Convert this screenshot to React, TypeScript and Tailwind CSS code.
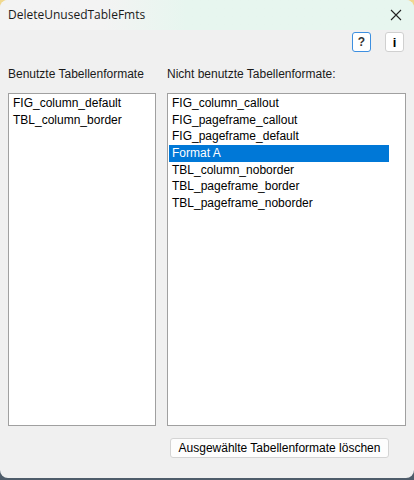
const USED = ['FIG_column_default', 'TBL_column_border'];

const UNUSED = [
  'FIG_column_callout',
  'FIG_pageframe_callout',
  'FIG_pageframe_default',
  'Format A',
  'TBL_column_noborder',
  'TBL_pageframe_border',
  'TBL_pageframe_noborder',
];

const sans = { fontFamily: '"Liberation Sans", Arial, sans-serif' };

function ListBox({ items, selected, className = '' }: { items: string[]; selected?: string; className?: string }) {
  return (
    <div className={`bg-white border border-[#a0a0a0] pt-px pl-px ${className}`}>
      <div className="w-[220px]">
        {items.map((item) => (
          <div
            key={item}
            className={`h-[16.67px] leading-[16.67px] pl-[3px] text-[12px] whitespace-nowrap ${
              item === selected ? 'bg-[#0078d7] text-white' : 'text-black'
            }`}
          >
            {item}
          </div>
        ))}
      </div>
    </div>
  );
}

export default function App() {
  return (
    <div className="w-[414px] h-[480px] bg-gradient-to-b from-[#f1d98f] to-[#4e5c6a] overflow-hidden">
      <div className="w-[414px] h-[478px] rounded-lg overflow-hidden bg-[#f0f0f0] flex flex-col" style={sans}>
        {/* Title bar */}
        <div className="h-[30px] flex items-center justify-between pl-2 pr-[10px] bg-gradient-to-r from-[#f3f3f3] from-25% to-[#e7f6ef] to-45%">
          <span className="text-[12px] text-[#1a1a1a]" style={{ fontFamily: '"Open Sans", "Liberation Sans", sans-serif' }}>
            DeleteUnusedTableFmts
          </span>
          <svg width="12" height="12" viewBox="0 0 12 12" className="mr-[2px]">
            <path d="M1 1 L11 11 M11 1 L1 11" stroke="#222" strokeWidth="1.1" />
          </svg>
        </div>

        {/* Help / info buttons */}
        <div className="flex justify-end gap-[14px] pr-[10px] pt-[2px]">
          <button className="w-[19px] h-[20px] bg-white border border-[#3d8fe0] rounded-[3px] text-[12px] font-bold text-[#333] leading-none flex items-center justify-center">
            ?
          </button>
          <button className="w-[19px] h-[20px] bg-white border border-[#d0d0d0] rounded-[3px] text-[13px] font-bold text-black leading-none flex items-center justify-center">
            i
          </button>
        </div>

        {/* Labels */}
        <div className="flex mt-[14px] h-[16px] items-center text-[12px] text-[#1a1a1a] whitespace-nowrap">
          <span className="w-[167px] pl-2">Benutzte Tabellenformate</span>
          <span>Nicht benutzte Tabellenformate:</span>
        </div>

        {/* Lists */}
        <div className="flex mt-[11px] pl-2 gap-[11px]">
          <ListBox items={USED} className="w-[148px] h-[333px]" />
          <ListBox items={UNUSED} selected="Format A" className="w-[239px] h-[333px]" />
        </div>

        {/* Action */}
        <div className="flex justify-end pr-[25px] mt-[12px]">
          <button className="w-[219px] h-[20px] bg-[#fdfdfd] border border-[#d4d4d4] rounded-[3px] text-[12px] text-black leading-none whitespace-nowrap">
            Ausgewählte Tabellenformate löschen
          </button>
        </div>
      </div>
    </div>
  );
}
